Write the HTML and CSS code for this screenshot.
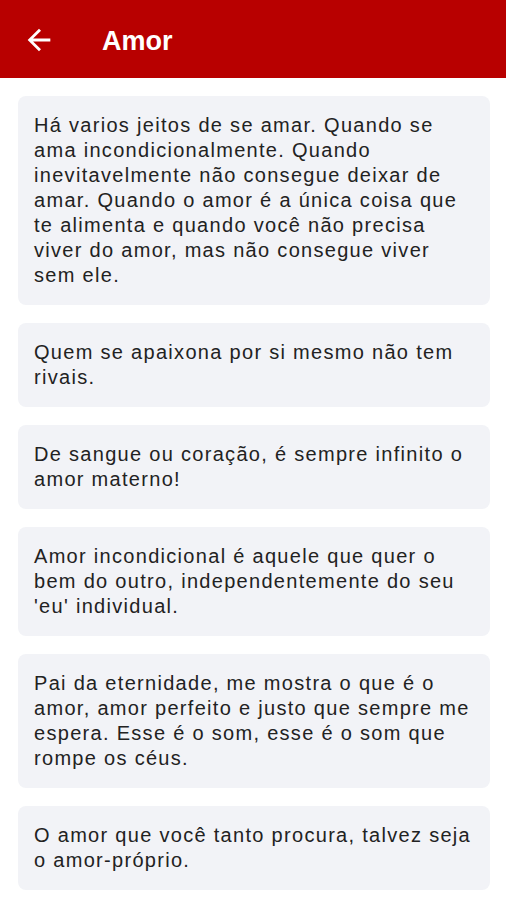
FILE: index.html
```html
<!DOCTYPE html>
<html lang="pt">
<head>
    <meta charset="UTF-8">
    <meta name="viewport" content="width=device-width, initial-scale=1.0">
    <title>Amor</title>
    <link rel="stylesheet" href="styles.css">
</head>
<body>
    <header class="topbar">
        <svg class="back-icon" width="34" height="34" viewBox="0 0 24 24">
            <path d="M20 11H7.83l5.59-5.59L12 4l-8 8 8 8 1.41-1.41L7.83 13H20v-2z" fill="white"/>
        </svg>
        <h1 class="title">Amor</h1>
    </header>

    <main class="list">
        <div class="card">Há varios jeitos de se amar. Quando se ama incondicionalmente. Quando inevitavelmente não consegue deixar de amar. Quando o amor é a única coisa que te alimenta e quando você não precisa viver do amor, mas não consegue viver sem ele.</div>
        <div class="card">Quem se apaixona por si mesmo não tem rivais.</div>
        <div class="card">De sangue ou coração, é sempre infinito o amor materno!</div>
        <div class="card">Amor incondicional é aquele que quer o bem do outro, independentemente do seu 'eu' individual.</div>
        <div class="card">Pai da eternidade, me mostra o que é o amor, amor perfeito e justo que sempre me espera. Esse é o som, esse é o som que rompe os céus.</div>
        <div class="card">O amor que você tanto procura, talvez seja o amor-próprio.</div>
    </main>
</body>
</html>
```

FILE: styles.css
```css
body {
    margin: 0;
    background: #ffffff;
    font-family: "Liberation Sans", Arial, sans-serif;
}
.topbar {
    height: 78px;
    background: #b80000;
    display: flex;
    align-items: center;
    padding: 6px 0 0 22px;
    box-sizing: border-box;
}
.back-icon {
    display: block;
    margin-top: -4px;
}
.title {
    margin: -2px 0 0 46px;
    color: white;
    font-size: 27px;
    font-weight: bold;
}
.list {
    display: flex;
    flex-direction: column;
    gap: 18px;
    padding: 18px 16px 18px 18px;
}
.card {
    background: #f2f3f7;
    border-radius: 8px;
    padding: 17px 16px 17px 16px;
    font-size: 20px;
    line-height: 25px;
    letter-spacing: 1.3px;
    color: #222;
}
```
